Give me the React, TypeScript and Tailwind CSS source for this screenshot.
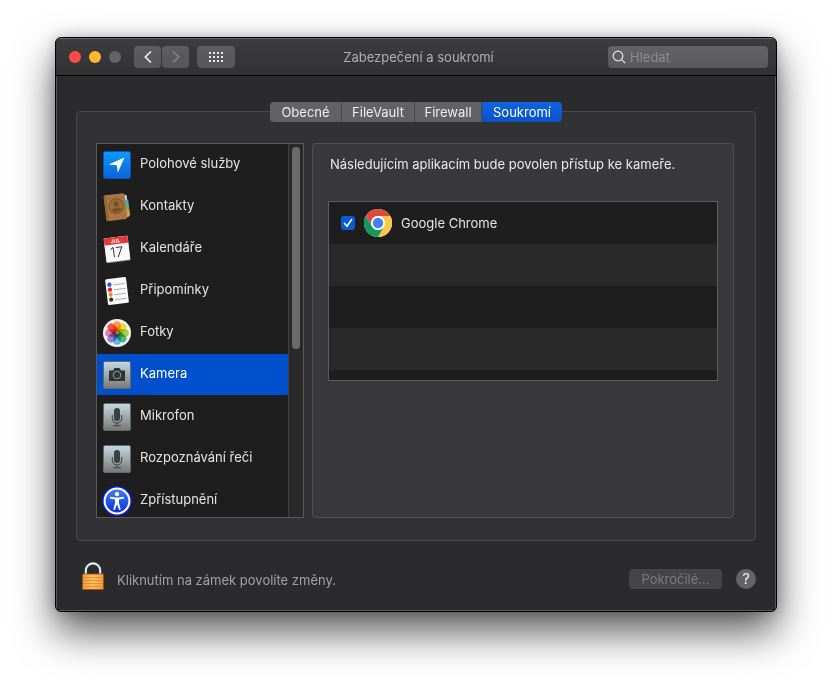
import React, { useState } from 'react';

const FONT = "font-['Inter','Liberation_Sans',sans-serif]";

function LocationIcon() {
  return (
    <svg viewBox="0 0 28 28" className="size-7">
      <defs>
        <linearGradient id="loc" x1="0" y1="0" x2="0" y2="1">
          <stop offset="0" stopColor="#0b9bf8" />
          <stop offset="1" stopColor="#0a62da" />
        </linearGradient>
      </defs>
      <rect x="0.5" y="0.5" width="27" height="27" rx="2" fill="url(#loc)" stroke="#0c53c4" />
      <path d="M21.4 6.5 L5.6 13.6 L13.8 14.2 L14.8 21.8 Z" fill="#fff" />
    </svg>
  );
}

function ContactsIcon() {
  return (
    <svg viewBox="0 0 28 28" className="size-7">
      <g transform="rotate(-7 14 14)">
        <rect x="20" y="3" width="5" height="22" rx="1" fill="#d0d4d6" />
        <rect x="21" y="8" width="5" height="5" fill="#4aa5d8" />
        <rect x="21" y="13" width="5" height="5" fill="#5fb84e" />
        <rect x="21" y="18" width="5" height="6" fill="#ee9a2f" />
        <rect x="2" y="1" width="21" height="26" rx="2" fill="#a87642" />
        <rect x="2" y="1" width="2.5" height="26" rx="1" fill="#98682f" />
        <circle cx="13.5" cy="13" r="7.3" fill="#9c6c3a" stroke="#7d5328" strokeWidth="1" />
        <circle cx="13.5" cy="11" r="2.7" fill="#7a5026" />
        <path d="M8.4 16.8 Q9.5 14.6 13.5 14.6 Q17.5 14.6 18.6 16.8 Q13.5 21 8.4 16.8" fill="#7a5026" />
      </g>
    </svg>
  );
}

function CalendarIcon() {
  return (
    <svg viewBox="0 0 28 28" className="size-7">
      <g transform="rotate(-7 14 14)">
        <rect x="2" y="2" width="24" height="25" rx="1" fill="#8b8b8b" />
        <rect x="2" y="2" width="24" height="24" rx="1" fill="#fafafa" />
        <rect x="2" y="2" width="24" height="7" rx="1" fill="#e2393b" />
        <text x="13.5" y="7.6" textAnchor="middle" fontFamily="Inter" fontWeight="700" fontSize="5" fill="#fff">JUL</text>
        <text x="13.5" y="22" textAnchor="middle" fontFamily="Inter" fontWeight="300" fontSize="14" fill="#2e2e2e">17</text>
      </g>
    </svg>
  );
}

function RemindersIcon() {
  const dots = ['#1556ec', '#e92327', '#f08a22', '#34343a'];
  return (
    <svg viewBox="0 0 28 28" className="size-7">
      <g transform="rotate(-7 14 14)">
        <rect x="3.5" y="1" width="21" height="26" rx="1.5" fill="#fafafa" />
        {dots.map((color, i) => (
          <g key={color}>
            <circle cx="7.2" cy={6.8 + i * 5} r="2.1" fill={color} />
            <path d={`M11 ${7.4 + i * 5} H22.5`} stroke="#a8a8a8" strokeWidth="0.9" />
          </g>
        ))}
      </g>
    </svg>
  );
}

function PhotosIcon() {
  const petals = ['#f9a13a', '#efd93c', '#a5d14a', '#4cbb7a', '#62b4ea', '#9583cc', '#dd7cb8', '#f4564a'];
  return (
    <svg viewBox="0 0 28 28" className="size-7">
      <circle cx="14" cy="14" r="14" fill="#f3f3f3" />
      <g className="isolate">
        {petals.map((color, i) => (
          <rect
            key={color}
            x="10.3"
            y="2.2"
            width="7.4"
            height="11.2"
            rx="3.5"
            fill={color}
            className="mix-blend-multiply"
            transform={`rotate(${i * 45} 14 14)`}
          />
        ))}
      </g>
    </svg>
  );
}

function GreyTile({ children }: { children: React.ReactNode }) {
  return (
    <svg viewBox="0 0 28 28" className="size-7">
      <defs>
        <linearGradient id="tile" x1="0" y1="0" x2="0" y2="1">
          <stop offset="0" stopColor="#c3dbe2" />
          <stop offset="1" stopColor="#777877" />
        </linearGradient>
      </defs>
      <rect x="0.5" y="0.5" width="27" height="27" rx="1.5" fill="url(#tile)" stroke="#62696c" />
      {children}
    </svg>
  );
}

function CameraIcon() {
  return (
    <GreyTile>
      <path d="M6 9.5 h4 l1.5 -2.5 h5 l1.5 2.5 h4 v10.5 h-16 z" fill="#303335" />
      <circle cx="14" cy="14" r="3.8" fill="#303335" stroke="#939b9e" strokeWidth="1" />
    </GreyTile>
  );
}

function MicIcon() {
  return (
    <GreyTile>
      <rect x="11" y="5" width="6" height="13" rx="3" fill="#3c4042" />
      <path d="M9.3 12 V15.4 A4.7 4.7 0 0 0 18.7 15.4 V12 M14 20 V23 M10 22.8 H18" fill="none" stroke="#3c4042" strokeWidth="1" />
    </GreyTile>
  );
}

function AccessibilityIcon() {
  return (
    <svg viewBox="0 0 30 30" className="-mx-px size-[30px]">
      <defs>
        <linearGradient id="acc" x1="0" y1="0" x2="0" y2="1">
          <stop offset="0" stopColor="#3f82ee" />
          <stop offset="1" stopColor="#0f30d4" />
        </linearGradient>
      </defs>
      <circle cx="15" cy="15" r="15" fill="#0a1fe0" />
      <circle cx="15" cy="15" r="12.4" fill="url(#acc)" stroke="#fff" strokeWidth="2" />
      <circle cx="15" cy="8.2" r="2.1" fill="#fff" />
      <path d="M8 10.8 L13.2 11.6 H16.8 L22 10.8 V12.4 L17 13.6 V17 L18.7 23.4 L17.2 24 L15 18.2 L12.8 24 L11.3 23.4 L13 17 V13.6 L8 12.4 Z" fill="#fff" />
    </svg>
  );
}

function ChromeIcon() {
  return (
    <svg viewBox="0 0 48 48" className="size-7">
      <circle cx="24" cy="24" r="24" fill="#fff" />
      <path d="M3.2 12 A24 24 0 0 1 44.8 12 H24 A12 12 0 0 0 13.6 30 Z" fill="#dc4a3d" />
      <path d="M44.8 12 A24 24 0 0 1 24 48 L34.4 30 A12 12 0 0 0 24 12 Z" fill="#fdc944" />
      <path d="M24 48 A24 24 0 0 1 3.2 12 L13.6 30 A12 12 0 0 0 34.4 30 Z" fill="#14975a" />
      <circle cx="24" cy="24" r="11.4" fill="#fff" />
      <circle cx="24" cy="24" r="9" fill="#4383f1" />
    </svg>
  );
}

function LockIcon() {
  return (
    <svg viewBox="0 0 22 28" className="h-7 w-[22px]">
      <defs>
        <linearGradient id="body" x1="0" y1="0" x2="1" y2="0">
          <stop offset="0" stopColor="#f09a40" />
          <stop offset="0.5" stopColor="#ffc062" />
          <stop offset="1" stopColor="#f09a40" />
        </linearGradient>
      </defs>
      <path d="M3.8 13 V8.6 A7.2 7.2 0 0 1 18.2 8.6 V13" fill="none" stroke="#5f7884" strokeWidth="2.8" />
      <path d="M3.8 13 V8.6 A7.2 7.2 0 0 1 18.2 8.6 V13" fill="none" stroke="#f2f7fa" strokeWidth="1.6" />
      <rect x="0.5" y="12" width="21" height="15.5" fill="url(#body)" stroke="#a04d12" strokeWidth="0.8" />
      <path d="M1 15.5 H21 M1 18.5 H21 M1 21.5 H21 M1 24.5 H21" stroke="#d9852f" strokeWidth="0.8" />
    </svg>
  );
}

const tabs = [
  { label: 'Obecné', width: 'w-[72px]' },
  { label: 'FileVault', width: 'w-[73px]' },
  { label: 'Firewall', width: 'w-[67px]' },
  { label: 'Soukromí', width: 'w-[80px]' },
];

const services = [
  { label: 'Polohové služby', icon: <LocationIcon /> },
  { label: 'Kontakty', icon: <ContactsIcon /> },
  { label: 'Kalendáře', icon: <CalendarIcon /> },
  { label: 'Připomínky', icon: <RemindersIcon /> },
  { label: 'Fotky', icon: <PhotosIcon /> },
  { label: 'Kamera', icon: <CameraIcon /> },
  { label: 'Mikrofon', icon: <MicIcon /> },
  { label: 'Rozpoznávání řeči', icon: <MicIcon /> },
  { label: 'Zpřístupnění', icon: <AccessibilityIcon /> },
];

function TitleBar() {
  const button = 'flex h-[22px] items-center justify-center rounded bg-linear-to-b from-[#5e5e60] to-[#565658]';
  return (
    <header className="grid h-[38px] grid-cols-[1fr_auto_1fr] items-center border-b border-black bg-linear-to-b from-[#3d3d3f] to-[#323234] pr-2 pl-[13px] shadow-[inset_0_1px_0_#68686a]">
      <div className="flex items-center">
        <div className="mr-[13px] flex gap-2">
          <button aria-label="Zavřít" className="size-3 rounded-full bg-[#ff4a48]" />
          <button aria-label="Minimalizovat" className="size-3 rounded-full bg-[#ffb630]" />
          <button aria-label="Zvětšit" disabled className="size-3 rounded-full bg-[#646466]" />
        </div>
        <button aria-label="Zpět" className={`${button} mr-px w-[27px]`}>
          <svg viewBox="0 0 8 12" className="h-3 w-2">
            <path d="M7 0.5 L1.3 6 L7 11.5" fill="none" stroke="#f0f0f0" strokeWidth="1.6" />
          </svg>
        </button>
        <button aria-label="Vpřed" disabled className={`${button} mr-2 w-[27px]`}>
          <svg viewBox="0 0 8 12" className="h-3 w-2">
            <path d="M1 0.5 L6.7 6 L1 11.5" fill="none" stroke="#868688" strokeWidth="1.5" />
          </svg>
        </button>
        <button aria-label="Zobrazit vše" className={`${button} w-[38px]`}>
          <svg viewBox="0 0 14 10" className="h-2.5 w-3.5" fill="#ececec">
            {[0, 4, 8].map((y) => [0, 4, 8, 12].map((x) => <rect key={`${x}-${y}`} x={x} y={y} width="2" height="2" />))}
          </svg>
        </button>
      </div>
      <h1 className="text-[13px] leading-4 text-[#b0b0b1]">Zabezpečení a soukromí</h1>
      <label className="flex h-[22px] w-40 items-center gap-1 justify-self-end rounded bg-linear-to-b from-[#636365] to-[#5a5a5c] px-1">
        <svg viewBox="0 0 14 14" className="size-3.5 shrink-0" fill="none" stroke="#e6e6e6" strokeWidth="1.2">
          <circle cx="6" cy="6" r="4.8" />
          <path d="M9.6 9.6 L13.2 13.2" />
        </svg>
        <input
          type="search"
          aria-label="Hledat"
          placeholder="Hledat"
          className="w-full min-w-0 bg-transparent text-[13px] leading-4 text-white outline-none placeholder:text-[#8d8d8f]"
        />
      </label>
    </header>
  );
}

function ServiceList() {
  const [selected, setSelected] = useState('Kamera');
  return (
    <div className="flex h-[375px] w-[208px] shrink-0 overflow-hidden border border-[#5a5a5c] bg-[#1e1e1f]">
      <ul className="flex-1">
        {services.map(({ label, icon }) => (
          <li key={label} className="pb-px">
            <button
              onClick={() => setSelected(label)}
              className={`flex h-[41px] w-full items-center gap-[9px] pt-px pl-1.5 text-left text-[13px] leading-4 ${
                selected === label ? 'bg-[#0050cd] text-white' : 'text-[#e4e4e5]'
              }`}
            >
              {icon}
              <span className="pb-1">{label}</span>
            </button>
          </li>
        ))}
      </ul>
      <div className="w-[15px] border-l border-[#404042] bg-[#29292a] px-[3px] pt-[3px]">
        <div className="h-[202px] w-2 rounded-full bg-[#6b6b6c]" />
      </div>
    </div>
  );
}

function CameraPanel() {
  return (
    <section className="min-w-0 flex-1 rounded border border-[#505052] bg-[#39393b] px-[15px] pt-3">
      <p className="pl-0.5 text-[13px] leading-4 text-[#e8e8e8]">
        Následujícím aplikacím bude povolen přístup ke kameře.
      </p>
      <ul className="mt-[29px] h-[180px] overflow-hidden border border-[#5c5c5e] bg-[#1e1e1f]">
        <li className="h-[42px]">
          <label className="flex h-full items-center gap-[9px] pl-3 text-[13px] leading-4 text-[#e4e4e5]">
            <span className="grid size-3.5 place-items-center">
              <input
                type="checkbox"
                defaultChecked
                className="peer col-start-1 row-start-1 size-3.5 appearance-none rounded-[3px] bg-[#5e5e60] checked:bg-[#0c5bd6]"
              />
              <svg viewBox="0 0 14 14" className="pointer-events-none invisible col-start-1 row-start-1 size-3.5 peer-checked:visible">
                <path d="M3.5 7.4 L6 10.2 L10.6 3.6" fill="none" stroke="#fff" strokeWidth="1.6" strokeLinecap="round" />
              </svg>
            </span>
            <ChromeIcon />
            <span>Google Chrome</span>
          </label>
        </li>
        <li className="h-[42px] bg-[#29292a]" />
        <li className="h-[42px]" />
        <li className="h-[42px] bg-[#29292a]" />
      </ul>
    </section>
  );
}

export default function App() {
  const [tab, setTab] = useState('Soukromí');
  return (
    <div className={`min-h-screen bg-white px-[55px] pt-[37px] pb-[73px] ${FONT}`}>
      <main className="overflow-hidden rounded-md border border-black bg-[#2b2b2d] shadow-[0_20px_40px_rgba(0,0,0,0.65),0_0_14px_rgba(0,0,0,0.2)]">
        <TitleBar />
        <div className="px-5 pt-[35px] shadow-[inset_1px_-1px_0_#58585a,inset_-1px_0_0_#58585a]">
          <div className="rounded border border-[#4a4a4c] bg-[#323234]">
            <div role="tablist" className="mx-auto -mt-2.5 mb-[21px] flex h-5 w-fit overflow-hidden rounded">
              {tabs.map(({ label, width }) => (
                <button
                  key={label}
                  role="tab"
                  aria-selected={tab === label}
                  onClick={() => setTab(label)}
                  className={`${width} border-r border-[#48484a] text-[13px] leading-4 last:border-r-0 ${
                    tab === label ? 'bg-linear-to-b from-[#0f62e0] to-[#0a53c9] text-white' : 'bg-[#626264] text-[#eeeeee]'
                  }`}
                >
                  {label}
                </button>
              ))}
            </div>
            <div className="flex gap-2 pr-[21px] pb-[22px] pl-[19px]">
              <ServiceList />
              <CameraPanel />
            </div>
          </div>
          <footer className="flex h-[70px] items-center pt-[5px]">
            <button aria-label="Zámek" className="mr-[13px] ml-[6px] pb-[6px]">
              <LockIcon />
            </button>
            <p className="flex-1 pt-0.5 text-[13px] leading-4 text-[#a2a2a3]">Kliknutím na zámek povolíte změny.</p>
            <button disabled className="mr-3.5 h-5 w-[93px] rounded bg-[#454547] text-[13px] leading-4 text-[#7a7a7c]">
              Pokročilé…
            </button>
            <button aria-label="Nápověda" className="size-5 rounded-full bg-[#656567] text-[15px] leading-5 text-[#eeeeee]">
              ?
            </button>
          </footer>
        </div>
      </main>
    </div>
  );
}
